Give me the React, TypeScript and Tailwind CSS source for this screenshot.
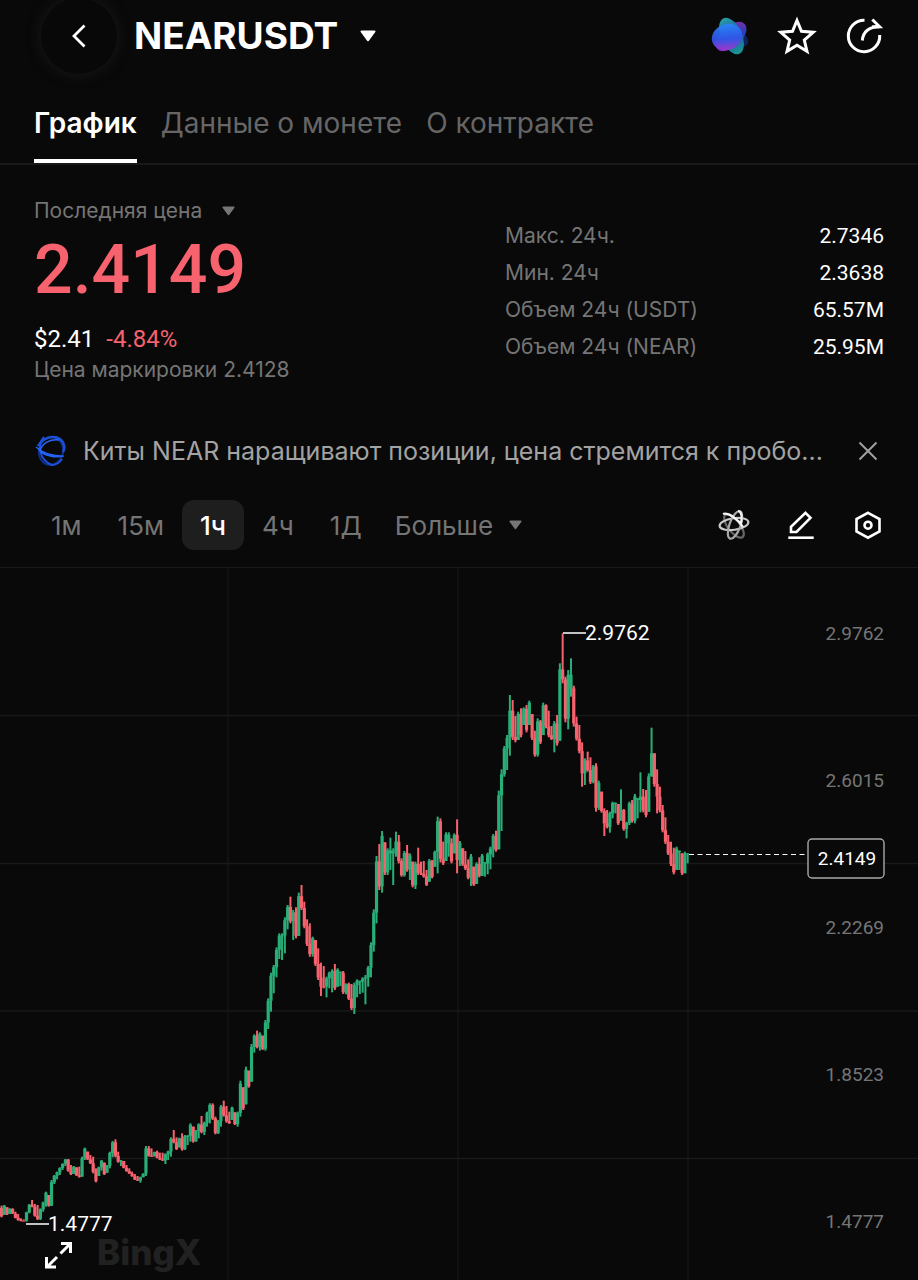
import { JSX } from 'react';

interface Candle {
  up: boolean;
  high: number;
  low: number;
  open: number;
  close: number;
}

interface Section {
  top: number;
  bars: string;
}

const UP = '#2aae78';
const DOWN = '#f6626e';

const tabs: string[] = ['График', 'Данные о монете', 'О контракте'];
const intervals: string[] = ['1м', '15м', '1ч', '4ч', '1Д'];

const stats = [
  { label: 'Макс. 24ч.', value: '2.7346' },
  { label: 'Мин. 24ч', value: '2.3638' },
  { label: 'Объем 24ч (USDT)', value: '65.57M' },
  { label: 'Объем 24ч (NEAR)', value: '25.95M' },
];

const axis = [
  { y: 65, price: '2.9762' },
  { y: 212, price: '2.6015' },
  { y: 359, price: '2.2269' },
  { y: 506, price: '1.8523' },
  { y: 653, price: '1.4777' },
];

// Direction, high, low and an optional close, in thirds of a unit below the section's top
const sections: Section[] = [
  {
    top: 492,
    bars: `r437-472 g435-465 r442-465 g445-462 r445-462 r455-475 r462-482 r475-484 r478-482 g455-485 g432-460
      r420-442 r432-470 r435-480 g445-480 g425-455 g395-440 r405-440 g360-438 g345-372 g335-358 g322-345 g310-330
      g297-318 r297-335 r315-345 g318-342 r322-348 r320-353 g290-350 g263-300 r275-300 r285-312 r290-340 r325-367
      g320-348 g300-332 r308-345 g315-338 g275-325 g243-292 r238-292 r275-308 g300-318 r303-325 r315-335 r325-342
      r335-350 r342-360 r348-363 g350-368 g340-352 g258-348 r258-290 r265-290 g275-290 r272-295 r278-300 r278-303
      g280-312 g272-300 g232-290 r210-250 r232-270 g233-262 r220-272 g225-270 g225-255 g190-245 r200-248 g210-245
      g190-235 r168-220 g185-225 g155-200 g130-190 r130-180 r170-223 g180-222 g135-200`,
  },
  {
    top: 292,
    bars: `r722-770 r738-788 r755-792 g740-780 r757-795 g755-800 g662-770 r682-750 g620-733 r632-683 g552-665
      g523-578 r512-565 g517-572 r527-570 g480-572 g415-507 g338-455 g315-400 g262-352 g220-297 g220-300 g172-280
      g135-208 r110-190 g150-240 r142-235 g98-228 r75-150 r125-205 r178-258 r190-290 g230-290 r240-318 r265-360
      r308-408-380 r318-385 g350-412 g335-385 g328-397 r312-390 g325-380 g335-378 r333-402 g370-403 r368-420
      r372-450 g368-462 g358-412 g362-402 g352-398 g345-433 g318-380 g247-352 g148-275`,
  },
  {
    top: 212,
    bars: `g228-430 r192-330 g153-338 r187-285 g205-285 g173-270-220 g205-315 g155-230-185 r165-250 r235-290
      g213-290 r195-275 g220-300 r245-322 g245-327 r203-285 r245-285 r243-293 r270-318 g237-305 r240-295 g212-260
      g110-280 r115-247 r185-255 g157-243 g157-230-190 r175-250 g160-220 r118-280-240 g183-258 r205-258 r213-270
      r238-298 g222-318 r260-318 g247-312 r232-292 g222-288 g247-290 g218-283 g200-268 g162-232 r152-215`,
  },
  {
    top: 42,
    bars: `g542-718 g478-663 g408-500 g375-480 g255-437-302 r270-390 r318-397 g305-390 r295-382 g292-345 r285-367
      g272-345 r312-390 r362-440 g325-440 r330-402 g278-375 r283-355 r302-382 r348-390 g333-427 r315-407 g160-392
      r70-220 r200-337 g180-358 g145-260-235 r227-350 r320-392 r345-430 r397-530-490 g445-525 r425-485 r442-522
      g465-520 r460-605 g512-600 r545-608 r595-678-640 r600-655 g605-668 g575-625 g577-610 r582-645 g538-632-600
      r597-662 g635-685 g575-645 r570-638 g552-640 g565-625 g487-607-560 r537-607 r540-622 g490-605 g353-500-430
      r430-530 r478-610-560 r530-607 r585-667 r622-702 r675-735 r695-768 r713-793 g710-780 g722-780 r730-795
      g725-790 g730-760`,
  },
];

function readCandles(): Candle[] {
  const candles: Candle[] = [];
  let last = 640;
  for (const section of sections) {
    for (const bar of section.bars.split(/\s+/)) {
      const up = bar[0] === 'g';
      const [high, low, fixed] = bar.slice(1).split('-').map((n) => section.top + Number(n) / 3);
      const inset = (low - high) * 0.08;
      const close = fixed ?? (up ? high + inset : low - inset);
      const open = Math.min(Math.max(last, high), low);
      candles.push({ up, high, low, open, close });
      last = close;
    }
  }
  return candles;
}

const candles = readCandles();

function Caret({ className }: { className: string }): JSX.Element {
  return (
    <svg viewBox="0 0 16 12" className={className} fill="currentColor" aria-hidden="true">
      <path d="M1.500 .5h13a1 1 0 0 1 .8 1.600l-6.400 8.600a1.100 1.100 0 0 1-1.800 0L.7 2.100A1 1 0 0 1 1.500 .5z" />
    </svg>
  );
}

function BlobIcon(): JSX.Element {
  return (
    <svg viewBox="0 0 40 40" className="size-10">
      <defs>
        <linearGradient id="blob-teal" x1="0" y1="0" x2="0" y2="1">
          <stop offset="0" stopColor="#2a9fa0" />
          <stop offset=".5" stopColor="#1a55b8" />
          <stop offset="1" stopColor="#1c9a8c" />
        </linearGradient>
        <linearGradient id="blob-violet" x1="1" y1="0" x2="0" y2="1">
          <stop offset="0" stopColor="#9a2a9c" />
          <stop offset=".5" stopColor="#2440c0" />
          <stop offset="1" stopColor="#b32bc4" />
        </linearGradient>
        <linearGradient id="blob-front" x1=".65" y1="0" x2=".3" y2="1">
          <stop offset="0" stopColor="#2a86fa" />
          <stop offset=".55" stopColor="#2f56ea" />
          <stop offset="1" stopColor="#b030cc" />
        </linearGradient>
      </defs>
      <ellipse cx="26" cy="22" rx="13" ry="8" transform="rotate(25 26 22)" fill="#11205c" />
      <ellipse cx="21" cy="20.500" rx="18.500" ry="10.500" transform="rotate(-42 21 20.500)" fill="url(#blob-violet)" />
      <ellipse cx="21.500" cy="20" rx="10.500" ry="19.500" transform="rotate(-24 21.500 20)" fill="url(#blob-teal)" />
      <ellipse cx="17" cy="21" rx="15.500" ry="12.800" transform="rotate(-20 17 21)" fill="url(#blob-front)" opacity=".92" />
    </svg>
  );
}

function StarIcon(): JSX.Element {
  return (
    <svg viewBox="0 0 40 40" className="size-10" fill="none" stroke="currentColor" strokeWidth="3">
      <path d="M20 4.500l4.500 10.800 11.700 1-8.900 7.700 2.700 11.400L20 29.300l-10 6.100 2.700-11.400-8.900-7.700 11.700-1z" />
    </svg>
  );
}

function ShareIcon(): JSX.Element {
  return (
    <svg viewBox="0 0 40 40" className="size-10" fill="none" stroke="currentColor" strokeWidth="3">
      <path d="M20.500 4.300A15.700 15.700 0 1 0 35.700 19" />
      <path d="M18.300 24.500C19 16.500 24.500 11 35.500 10.800" />
      <path d="M28.300 3.500l7.300 7.300h-7.500" />
    </svg>
  );
}

function PlanetIcon(): JSX.Element {
  return (
    <svg viewBox="0 0 32 32" className="size-8 shrink-0" fill="none" aria-hidden="true">
      <ellipse cx="17" cy="16" rx="12" ry="14" stroke="#0f2f80" strokeWidth="2" transform="rotate(14 17 16)" />
      <path d="M4 11C9 2 20 0 26 4c5 4 5 10 3 13" stroke="#1c50d8" strokeWidth="2.500" />
      <path d="M10 2C3 10 5 25 18 30c5 0 8-3 10-6" stroke="#1a50dc" strokeWidth="2" />
      <path d="M2 12c6 6 16 9 28 9-8 2.500-20 0-25-6" fill="#2563fa" stroke="#2563fa" strokeWidth="1.200" />
      <path d="M6 16C8 8 16 4 25 5" stroke="#2a68ff" strokeWidth="1.500" />
    </svg>
  );
}

function AtomIcon(): JSX.Element {
  return (
    <svg viewBox="0 0 32 32" className="size-8" fill="none" strokeWidth="2.200">
      <ellipse cx="16" cy="17" rx="6" ry="14" stroke="#666666" transform="rotate(-38 16 17)" />
      <ellipse cx="16" cy="15" rx="14.500" ry="5.800" stroke="#c9c9c9" transform="rotate(-8 16 15)" />
      <ellipse cx="17" cy="16" rx="5.500" ry="14.500" stroke="#a8a8a8" transform="rotate(20 17 16)" />
      <path d="M5 5c5-2 15 5 20 13M20 1.800c4 1 4.500 7 2.500 14" stroke="#f4f4f4" />
    </svg>
  );
}

function PencilIcon(): JSX.Element {
  return (
    <svg viewBox="0 0 32 32" className="size-8" fill="none" stroke="currentColor" strokeWidth="2.600">
      <path d="M20.500 3.800l5 5L11.500 23H6v-5.200z" />
      <path d="M3.300 28.700h25.400" />
    </svg>
  );
}

function SettingsIcon(): JSX.Element {
  return (
    <svg viewBox="0 0 32 32" className="size-8" fill="none" stroke="currentColor" strokeWidth="2.600">
      <path d="M16 3.800l11.500 6.300v12.300L16 28.700 4.500 22.400V10.100z" />
      <circle cx="16" cy="16.200" r="3.500" />
    </svg>
  );
}

function Chart(): JSX.Element {
  return (
    <svg viewBox="0 0 918 712" className="block w-full font-['Roboto',sans-serif]" role="img" aria-label="NEARUSDT">
      {/* Grid */}
      <path d="M228 0V712M458 0V712M688 0V712" stroke="#151515" strokeWidth="1.500" />
      <path d="M0 147.500H918M0 295.500H918M0 443H918M0 590.500H918" stroke="#191919" strokeWidth="1.500" />

      {/* Watermark */}
      <text x="97" y="697" fontSize="35" fontWeight="800" fill="#212121" className="font-['Inter',sans-serif]">
        BingX
      </text>

      {/* Candles */}
      {candles.map((c, i) => {
        const x = 1.5 + i * 2.778;
        const color = c.up ? UP : DOWN;
        return (
          <g key={i} fill={color}>
            <rect x={x - 1} y={c.high} width="2" height={c.low - c.high} />
            <rect x={x - 1.6} y={Math.min(c.open, c.close)} width="3.200" height={Math.max(Math.abs(c.close - c.open), 1)} />
          </g>
        );
      })}

      {/* High and low marks */}
      <path d="M563 65h23M26 656h23" stroke="#ffffff" strokeWidth="1.500" />
      <text x="585" y="72" fontSize="21" fill="#ffffff">2.9762</text>
      <text x="48" y="663" fontSize="21" fill="#ffffff">1.4777</text>

      {/* Price axis */}
      {axis.map(({ y, price }) => (
        <text key={price} x="884" y={y + 7} fontSize="19" textAnchor="end" fill="#757575">
          {price}
        </text>
      ))}

      {/* Current price */}
      <path d="M689 286.500H808" stroke="#ffffff" strokeWidth="1.200" strokeDasharray="5 3.500" />
      <rect x="808" y="271" width="76" height="39" rx="4" fill="#090909" stroke="#a8a8a8" strokeWidth="1.400" />
      <text x="847" y="297" fontSize="19" textAnchor="middle" fill="#ffffff">2.4149</text>
    </svg>
  );
}

export default function App(): JSX.Element {
  return (
    <div className="min-h-screen bg-[#090909] font-['Inter',sans-serif] text-white">
      {/* Header */}
      <header className="flex h-[72px] items-center pr-[34px] pl-[41px]">
        <button
          type="button"
          aria-label="Назад"
          className="flex size-[76px] shrink-0 items-center justify-center rounded-full bg-[#080808] shadow-[0_0_14px_#1a1a1a]"
        >
          <svg viewBox="0 0 24 24" className="size-6" fill="none" stroke="currentColor" strokeWidth="2.800">
            <path d="M17.500 1.500L7 12l10.500 10.500" />
          </svg>
        </button>
        <button type="button" className="ml-[17px] flex items-center gap-[22px]">
          <h1 className="text-[37px] leading-10 font-bold">NEARUSDT</h1>
          <Caret className="h-3 w-4" />
        </button>
        <div className="ml-auto flex items-center gap-[27px]">
          <button type="button" aria-label="AI">
            <BlobIcon />
          </button>
          <button type="button" aria-label="Избранное">
            <StarIcon />
          </button>
          <button type="button" aria-label="Поделиться">
            <ShareIcon />
          </button>
        </div>
      </header>

      {/* Tabs */}
      <nav className="flex h-[93px] items-end gap-6 border-b-2 border-[#191919] px-[34px] text-[28px] leading-9">
        {tabs.map((tab, i) => (
          <a
            key={tab}
            href="#"
            className={
              i === 0
                ? 'border-b-4 border-white pb-[18px] font-semibold'
                : 'border-b-4 border-transparent pb-[18px] text-[#666666]'
            }
          >
            {tab}
          </a>
        ))}
      </nav>

      {/* Price */}
      <section className="flex justify-between px-[34px] pt-8">
        <div>
          <button type="button" className="flex items-center gap-5 text-[21px] leading-7 text-[#757575]">
            Последняя цена
            <Caret className="h-[10px] w-[13px]" />
          </button>
          <p className="mt-[9px] font-['Roboto',sans-serif] text-[68px] leading-[72px] font-medium text-[#f6626e]">2.4149</p>
          <p className="mt-[17px] flex gap-3 font-['Roboto',sans-serif] text-2xl">
            <span>$2.41</span>
            <span className="text-[#f6626e]">-4.84%</span>
          </p>
          <p className="mt-px text-[21px] leading-7 text-[#757575]">Цена маркировки 2.4128</p>
        </div>
        <dl className="mt-[25px] flex w-[379px] flex-col gap-[9px] text-[21px] leading-7">
          {stats.map(({ label, value }) => (
            <div key={label} className="flex justify-between">
              <dt className="text-[#757575]">{label}</dt>
              <dd className="font-['Roboto',sans-serif]">{value}</dd>
            </div>
          ))}
        </dl>
      </section>

      {/* News */}
      <section className="mt-[47px] flex h-10 items-center px-[34px]">
        <PlanetIcon />
        <a href="#" className="ml-[17px] min-w-0 flex-1 truncate text-[25px] leading-9 text-[#a3a3a3]">
          Киты NEAR наращивают позиции, цена стремится к пробо...
        </a>
        <button type="button" aria-label="Закрыть" className="ml-4 text-[#a0a0a0]">
          <svg viewBox="0 0 32 32" className="size-8" fill="none" stroke="currentColor" strokeWidth="2">
            <path d="M7.500 7.500l17 17M24.500 7.500l-17 17" />
          </svg>
        </button>
      </section>

      {/* Intervals */}
      <section className="mt-[29px] flex items-center border-b border-[#191919] pr-[34px] pb-[17px] pl-[33px] text-[26px] text-[#757575]">
        {intervals.map((interval) => (
          <button
            key={interval}
            type="button"
            className={
              interval === '1ч'
                ? 'h-[50px] rounded-xl bg-[#1e1e1e] px-[18px] font-medium text-white'
                : 'h-[50px] px-[18px]'
            }
          >
            {interval}
          </button>
        ))}
        <button type="button" className="flex h-[50px] items-center gap-4 pl-[15px]">
          Больше
          <Caret className="h-[10px] w-[13px]" />
        </button>
        <div className="ml-auto flex gap-[35px] text-white">
          <button type="button" aria-label="AI-анализ">
            <AtomIcon />
          </button>
          <button type="button" aria-label="Рисование">
            <PencilIcon />
          </button>
          <button type="button" aria-label="Настройки">
            <SettingsIcon />
          </button>
        </div>
      </section>

      {/* Chart */}
      <main className="relative">
        <Chart />
        <button type="button" aria-label="На весь экран" className="absolute bottom-[9px] left-[43px]">
          <svg viewBox="0 0 32 32" className="size-8" fill="none" stroke="currentColor" strokeWidth="3">
            <path d="M17.500 14.500L27 5M18 4.500h9.500V14M14 18l-9.500 9.500M3.500 18v10H13" />
          </svg>
        </button>
      </main>
    </div>
  );
}
